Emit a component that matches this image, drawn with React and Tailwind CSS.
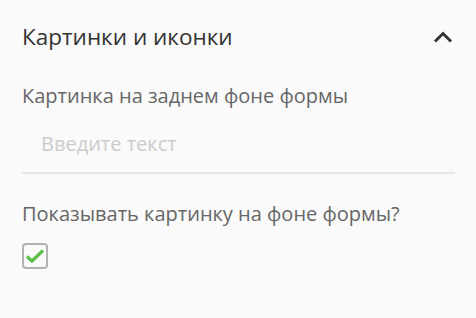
export default function App() {
  return (
    <div className="min-h-[318px] w-[476px] bg-[#fafafa] px-[22px] pt-[21px] font-['Open_Sans',sans-serif]">
      <div className="flex items-center justify-between">
        <h2 className="text-[22.5px] leading-[32px] text-[#333]">Картинки и иконки</h2>
        <svg width="20" height="12" viewBox="0 0 20 12" className="mr-[1px]">
          <path d="M2 10.5 L10 2.5 L18 10.5" fill="none" stroke="#333" strokeWidth="3" />
        </svg>
      </div>

      <label className="mt-[31px] block text-[20px] leading-[24px] text-[#666]">Картинка на заднем фоне формы</label>
      <input
        type="text"
        placeholder="Введите текст"
        className="mt-[24px] block w-[433px] border-b-2 border-[#e6e6e6] bg-transparent pb-[16px] pl-[19px] text-[20px] leading-[24px] text-[#333] outline-none placeholder:text-[#ccc]"
      />

      <label className="mt-[28px] block text-[20px] leading-[24px] text-[#666]">Показывать картинку на фоне формы?</label>
      <div className="mt-[17px] flex h-[26px] w-[26px] items-center justify-center rounded-[4px] border-2 border-[#b3b3b3]">
        <svg width="20" height="16" viewBox="0 0 20 16">
          <path d="M2 8.5 L7 13 L18 2.5" fill="none" stroke="#5cbf4a" strokeWidth="3.2" />
        </svg>
      </div>
    </div>
  )
}
